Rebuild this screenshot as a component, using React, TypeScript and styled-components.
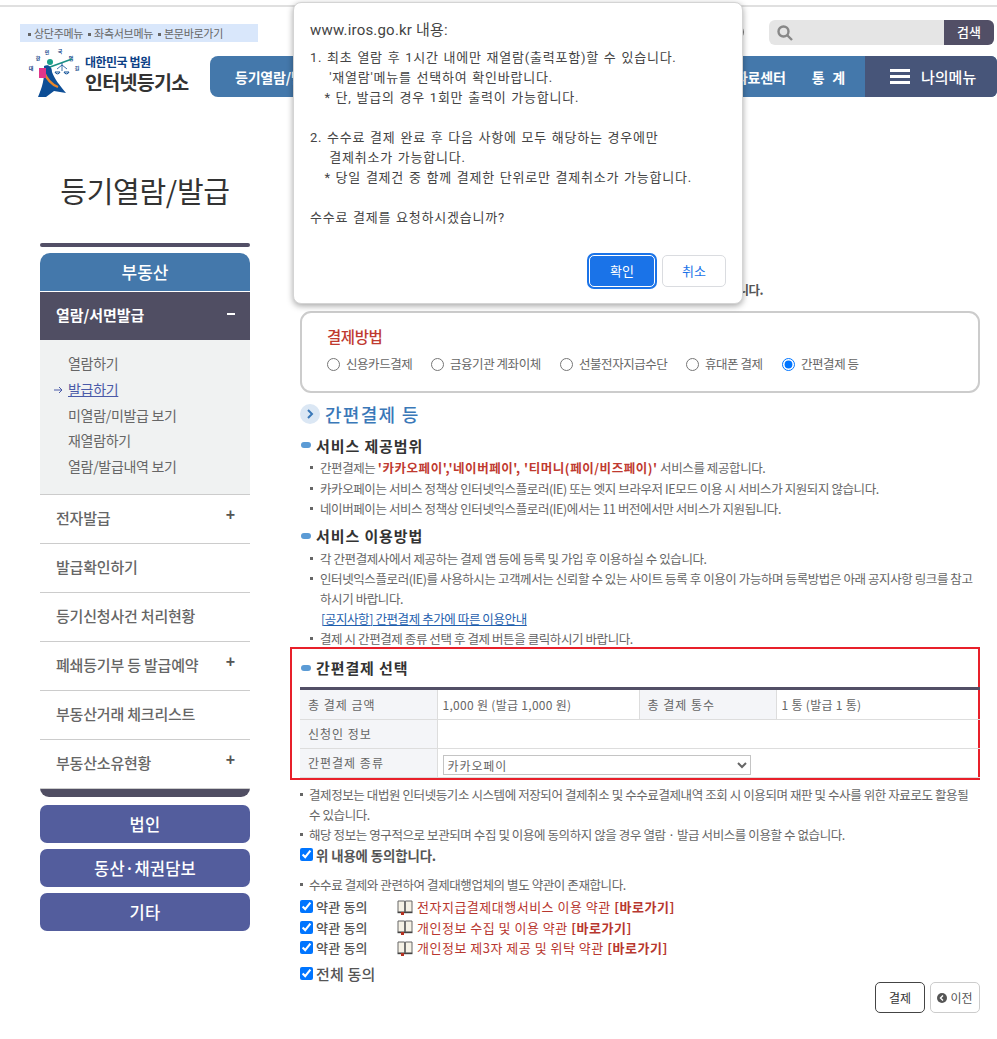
import React from "react";
import styled, { createGlobalStyle } from "styled-components";

const Global = createGlobalStyle`
  html, body { margin: 0; padding: 0; background: #fff; }
  body { font-family: "Noto Sans CJK KR", "Noto Sans", sans-serif; color: #666; }
  * { box-sizing: border-box; }
`;

const Page = styled.div`
  position: relative;
  width: 997px;
  height: 1039px;
  overflow: hidden;
  padding-top: 5px;
`;
const TopLine = styled.div`
  height: 2px;
  background: #e0e0e0;
`;
const TopRow = styled.div`
  display: flex;
  align-items: flex-start;
  padding: 13px 3px 0 20px;
  height: 38px;
`;
const SkipBar = styled.div`
  width: 238px;
  height: 18px;
  margin-top: 4px;
  padding-left: 8px;
  background: #d9e7fb;
  display: flex;
  gap: 5px;
  font-size: 11px;
  line-height: 18px;
  letter-spacing: -0.3px;
  color: #666;
`;
const Skip = styled.span`
  &::before {
    content: "";
    display: inline-block;
    width: 3px;
    height: 3px;
    background: #666;
    margin: 0 3px 2px 0;
    vertical-align: middle;
  }
`;
const Ring = styled.div`
  width: 14px;
  height: 14px;
  margin: 5px 25px 0 auto;
  border: 2px solid #777;
  border-radius: 50%;
`;
const Search = styled.div`
  width: 225px;
  height: 25px;
  background: #e5e5e5;
  border-radius: 6px;
  overflow: hidden;
  display: flex;
  align-items: center;
  justify-content: space-between;
  padding-left: 8px;
`;
const SearchBtn = styled.div`
  width: 50px;
  height: 25px;
  background: #524f66;
  color: #fff;
  font-size: 13px;
  font-weight: 500;
  line-height: 24px;
  text-align: center;
`;
const MainRow = styled.div`
  display: flex;
  align-items: flex-start;
  padding-left: 28px;
  margin-top: 3px;
  height: 49px;
`;
const Logo = styled.div`
  width: 182px;
  height: 49px;
  display: flex;
`;
const LogoText = styled.div`
  margin: 7px 0 0 5px;
  display: flex;
  flex-direction: column;
`;
const LogoTop = styled.div`
  font-size: 12px;
  line-height: 14px;
  font-weight: 700;
  letter-spacing: -0.5px;
  color: #0c4186;
`;
const LogoMain = styled.div`
  font-size: 19.5px;
  line-height: 25px;
  font-weight: 700;
  letter-spacing: -0.7px;
  color: #333;
`;
const Nav = styled.nav`
  flex: 1;
  height: 41px;
  margin-top: 8px;
  background: #4478ab;
  border-radius: 8px 6px 6px 8px;
  display: flex;
  align-items: center;
  overflow: hidden;
  padding-left: 25px;
`;
const NavItem = styled.div<{ $gap?: number; $wide?: boolean }>`
  color: #fff;
  font-size: 14px;
  font-weight: 700;
  letter-spacing: -0.2px;
  word-spacing: ${(p) => (p.$wide ? 5 : 0)}px;
  margin-right: ${(p) => p.$gap ?? 0}px;
  white-space: nowrap;
`;
const NavSpacer = styled.div`
  flex: 1;
`;
const MyMenu = styled.div`
  width: 132px;
  height: 41px;
  background: #475579;
  color: #fff;
  font-size: 15px;
  font-weight: 500;
  display: flex;
  align-items: center;
  gap: 11px;
  padding-left: 25px;
`;
const Burger = styled.span`
  width: 20px;
  height: 15px;
  border-top: 3px solid #fff;
  border-bottom: 3px solid #fff;
  display: flex;
  align-items: center;
  &::before {
    content: "";
    width: 100%;
    height: 3px;
    background: #fff;
  }
`;

const Main = styled.div`
  display: flex;
  padding-left: 40px;
`;
const Side = styled.aside`
  width: 210px;
  margin-right: 50px;
  padding-top: 74px;
`;
const SideTitle = styled.h1`
  margin: 0 0 32px;
  height: 40px;
  font-size: 29px;
  line-height: 38px;
  font-weight: 400;
  color: #333;
  text-align: center;
  letter-spacing: -0.3px;
  white-space: nowrap;
`;
const SideBar = styled.div`
  height: 4px;
  background: #524f66;
  border-radius: 2px;
  margin-bottom: 6px;
`;
const Category = styled.div`
  height: 38px;
  background: #4478ab;
  border-radius: 10px 10px 0 0;
  color: #fff;
  font-size: 17px;
  font-weight: 500;
  line-height: 38px;
  text-align: center;
  margin-bottom: 1px;
`;
const ActiveItem = styled.div`
  height: 48px;
  background: #504e63;
  color: #fff;
  font-size: 15px;
  font-weight: 700;
  letter-spacing: -0.05px;
  display: flex;
  align-items: center;
  justify-content: space-between;
  padding: 0 15px 3px 16px;
`;
const Minus = styled.span`
  width: 8px;
  height: 2px;
  background: #fff;
  margin-bottom: 2px;
`;
const SubPanel = styled.div`
  height: 154px;
  background: #f0f2f2;
  padding: 11px 0 0 28px;
`;
const SubItem = styled.div<{ $active?: boolean }>`
  position: relative;
  height: 25.8px;
  font-size: 14px;
  line-height: 25.8px;
  letter-spacing: -0.3px;
  color: ${(p) => (p.$active ? "#4a5aa8" : "#666")};
  text-decoration: ${(p) => (p.$active ? "underline" : "none")};
`;
const Arrow = styled.svg`
  position: absolute;
  left: -14px;
  top: 9px;
`;
const MenuItem = styled.div`
  height: 49px;
  border-top: 1px solid #ccc;
  display: flex;
  align-items: center;
  justify-content: space-between;
  padding: 0 15px 4px 16px;
  font-size: 15px;
  font-weight: 500;
  letter-spacing: -0.2px;
  color: #666;
`;
const Plus = styled.span`
  font-size: 16px;
  line-height: 16px;
  font-weight: 700;
  color: #555;
  margin-bottom: 4px;
  font-family: "Liberation Sans", sans-serif;
`;
const SideFoot = styled.div`
  height: 9px;
  background: #504e63;
  border-top: 1px solid #ccc;
  border-radius: 0 0 10px 10px;
  margin-bottom: 8px;
`;
const SideBtn = styled.div`
  height: 38px;
  margin-bottom: 6px;
  background: #535d9d;
  border-radius: 7px;
  color: #fff;
  font-size: 16.5px;
  font-weight: 500;
  line-height: 38px;
  text-align: center;
  letter-spacing: 0.2px;
`;

const Content = styled.main`
  width: 680px;
  padding-top: 183px;
`;
const HiddenLine = styled.div`
  width: 463px;
  height: 20px;
  font-size: 12.5px;
  line-height: 20px;
  font-weight: 700;
  letter-spacing: -0.5px;
  text-align: right;
  color: #555;
  white-space: nowrap;
`;
const PayBox = styled.div`
  height: 82px;
  margin-top: 11px;
  border: 2px solid #ccc;
  border-radius: 11px;
  padding: 11px 0 0 25px;
`;
const PayTitle = styled.div`
  font-size: 15.5px;
  line-height: 24px;
  font-weight: 500;
  color: #bf3a30;
  letter-spacing: -0.4px;
`;
const Radios = styled.div`
  display: grid;
  grid-template-columns: 104px 129px 126px 96px auto;
  margin-top: 6px;
`;
const RadioLabel = styled.label`
  display: flex;
  align-items: center;
  gap: 6px;
  font-size: 12.5px;
  line-height: 20px;
  letter-spacing: -0.45px;
  color: #666;
  white-space: nowrap;
`;
const Radio = styled.input`
  margin: 0;
  width: 13px;
  height: 13px;
`;
const Heading = styled.div`
  margin-top: 8px;
  height: 28px;
  padding-bottom: 2px;
  display: flex;
  align-items: center;
  gap: 5px;
  font-size: 18px;
  font-weight: 500;
  color: #3a78b8;
  letter-spacing: 1.3px;
`;
const ChevronBadge = styled.span`
  width: 20px;
  height: 20px;
  border-radius: 50%;
  background: #dbe7f4;
  display: flex;
  align-items: center;
  justify-content: center;
`;
const SubHead = styled.div<{ $top: number }>`
  margin-top: ${(p) => p.$top}px;
  height: 22px;
  padding-bottom: 2px;
  display: flex;
  align-items: center;
  gap: 5px;
  font-size: 15px;
  font-weight: 700;
  color: #333;
  letter-spacing: 0.9px;
  &::before {
    content: "";
    width: 10px;
    height: 6px;
    border-radius: 3px;
    background: #5b9bd5;
    margin-left: 1px;
  }
`;
const List = styled.div<{ $lh: number; $indent: number; $pad?: number }>`
  padding: ${(p) => p.$pad ?? 0}px 0 0 ${(p) => p.$indent}px;
  font-size: 12.5px;
  line-height: ${(p) => p.$lh}px;
  letter-spacing: -0.41px;
  color: #666;
`;
const Item = styled.div<{ $gap?: number }>`
  display: flex;
  &::before {
    content: "";
    flex: none;
    width: 3px;
    height: 3px;
    background: #666;
    margin: 8px ${(p) => p.$gap ?? 7}px 0 0;
  }
`;
const Strong = styled.b`
  color: #bf3a30;
  font-weight: 700;
  letter-spacing: 0.55px;
`;
const DocLink = styled.a`
  display: block;
  padding-left: 1px;
  color: #1f5fae;
  text-decoration: underline;
`;
const PickBox = styled.section`
  width: 690px;
  height: 133px;
  margin: -2px 0 0 -10px;
  border: 2px solid #e8202a;
  padding: 0 0 1px 8px;
`;
const PickHead = styled(SubHead)`
  height: 36px;
  margin-bottom: 2px;
  padding: 2px 0 0;
`;
const PayTable = styled.table`
  width: 680px;
  table-layout: fixed;
  border-collapse: collapse;
  border-top: 3px solid #524f66;
  font-size: 12px;
  letter-spacing: 0.3px;
  color: #666;
`;
const Row = styled.tr<{ $h: number }>`
  height: ${(p) => p.$h}px;
`;
const Th = styled.th`
  background: #f4f5f8;
  border: 1px solid #ddd;
  border-top: 0;
  border-left: 0;
  padding: 0 0 0 8px;
  text-align: left;
  font-weight: 400;
  letter-spacing: 1px;
`;
const Td = styled.td`
  border-bottom: 1px solid #ddd;
  border-right: 1px solid #ddd;
  padding: 0 0 0 5px;
  &:last-child { border-right: 0; }
`;
const Pick = styled.select`
  display: block;
  width: 308px;
  height: 20px;
  margin-top: 4px;
  padding: 0;
  border: 1px solid #c4c4c4;
  background: #fff;
  color: #666;
  font: inherit;
  letter-spacing: 0.9px;
`;
const Notes = styled(List)`
  margin-top: 5px;
`;
const AgreeStrong = styled.label`
  display: flex;
  align-items: center;
  gap: 3px;
  height: 20px;
  font-size: 13.4px;
  font-weight: 700;
  color: #555;
  letter-spacing: -0.1px;
`;
const Check = styled.input`
  margin: 0;
  width: 13px;
  height: 13px;
  flex: none;
`;
const TermsNote = styled(List)`
  margin-top: 10px;
`;
const Terms = styled.div`
  margin-top: 2px;
`;
const TermRow = styled.div`
  height: 20.5px;
  display: flex;
  align-items: center;
  font-size: 13px;
`;
const TermAgree = styled.label`
  width: 97px;
  display: flex;
  align-items: center;
  gap: 3px;
  font-weight: 500;
  color: #555;
  letter-spacing: 0.2px;
`;
const TermName = styled.a`
  margin-left: 4px;
  color: #b8372f;
  letter-spacing: 0.5px;
  font-weight: 400;
`;
const AllAgree = styled.label`
  margin-top: 5px;
  height: 20px;
  display: flex;
  align-items: center;
  gap: 3px;
  font-size: 15px;
  font-weight: 500;
  color: #555;
  letter-spacing: 0.2px;
`;
const Actions = styled.div`
  margin-top: -1px;
  display: flex;
  justify-content: flex-end;
  gap: 5px;
`;
const ActBtn = styled.div<{ $dark?: boolean }>`
  width: 50px;
  height: 31px;
  border: 1px solid ${(p) => (p.$dark ? "#444" : "#ccc")};
  border-radius: 5px;
  background: #fff;
  color: ${(p) => (p.$dark ? "#333" : "#555")};
  font-size: 12px;
  display: flex;
  align-items: center;
  justify-content: center;
  gap: 3px;
`;

const Dialog = styled.div`
  position: absolute;
  left: 293px;
  top: 2px;
  width: 450px;
  height: 302px;
  background: #fff;
  border: 1px solid #d4d4d4;
  border-radius: 8px;
  box-shadow: 0 2px 6px rgba(0, 0, 0, 0.35);
  padding: 16px 16px 0;
`;
const DialogTitle = styled.div`
  font-size: 15px;
  line-height: 22px;
  letter-spacing: 0.2px;
  color: #444;
  font-family: "Roboto", "Noto Sans CJK KR", sans-serif;
  margin-bottom: 7px;
`;
const DialogBody = styled.div`
  font-size: 13px;
  line-height: 20px;
  color: #444;
  white-space: pre;
  letter-spacing: 0.78px;
  word-spacing: 0.8px;
  min-height: 170px;
  font-family: "Roboto", "Noto Sans CJK KR", sans-serif;
`;
const DialogActions = styled.div`
  margin-top: 27px;
  display: flex;
  justify-content: flex-end;
  gap: 7px;
`;
const DialogBtn = styled.div<{ $primary?: boolean }>`
  width: ${(p) => (p.$primary ? 66 : 64)}px;
  height: 32px;
  border-radius: 5px;
  font-size: 13px;
  line-height: 30px;
  text-align: center;
  color: ${(p) => (p.$primary ? "#fff" : "#1a73e8")};
  background: ${(p) => (p.$primary ? "#1a73e8" : "#fff")};
  border: 1px solid ${(p) => (p.$primary ? "#fff" : "#dadce0")};
  box-shadow: ${(p) => (p.$primary ? "0 0 0 2px #1a73e8" : "none")};
`;

const LogoMark = () => (
  <svg width="52" height="49" viewBox="0 0 52 49">
    <g fontSize="5" fontWeight="700" fill="#0c4186" textAnchor="middle" fontFamily="'Noto Sans CJK KR', sans-serif">
      <text x="3" y="22">대</text>
      <text x="10" y="12">한</text>
      <text x="19" y="6">민</text>
      <text x="32" y="5">국</text>
      <text x="43" y="12">법</text>
      <text x="49" y="22">원</text>
    </g>
    <path d="M16 18C20 16 24 18 24 24C26 30 32 38 38 45L26 43L18 49L10 49C14 40 17 30 16 18Z" fill="#0d4e96" />
    <path d="M16 24C19 32 25 37 30 39" stroke="#e8862a" strokeWidth="2.2" fill="none" />
    <path d="M22 19L44 11" stroke="#1b8f85" strokeWidth="1.6" />
    <rect x="11" y="20" width="7" height="10" fill="#e0358a" />
    <circle cx="22" cy="14" r="3" fill="#1aa08a" />
    <path d="M34 15V23M29 21L34 17L39 21" stroke="#0d4e96" strokeWidth="0.8" fill="none" />
    <path d="M27 24A2.6 2.6 0 0 0 32 24ZM36 24A2.6 2.6 0 0 0 41 24Z" fill="none" stroke="#0d4e96" strokeWidth="1" />
  </svg>
);

const Book = () => (
  <svg width="16" height="16" viewBox="0 0 16 16">
    <path d="M1 2H7.6V13H1ZM8.4 2H15V13H8.4Z" fill="#f6f2e6" stroke="#666" strokeWidth="1" />
    <path d="M0.5 13.5H15.5" stroke="#444" strokeWidth="1.4" />
    <rect x="4" y="13" width="3" height="3" fill="#b5301f" />
  </svg>
);

const dialogText = `1. 최초 열람 후 1시간 내에만 재열람(출력포함)할 수 있습니다.
    '재열람'메뉴를 선택하여 확인바랍니다.
   * 단, 발급의 경우 1회만 출력이 가능합니다.

2. 수수료 결제 완료 후 다음 사항에 모두 해당하는 경우에만
    결제취소가 가능합니다.
   * 당일 결제건 중 함께 결제한 단위로만 결제취소가 가능합니다.

수수료 결제를 요청하시겠습니까?`;

const menu = [
  { t: "전자발급", plus: true },
  { t: "발급확인하기" },
  { t: "등기신청사건 처리현황" },
  { t: "폐쇄등기부 등 발급예약", plus: true },
  { t: "부동산거래 체크리스트" },
  { t: "부동산소유현황", plus: true },
];
const subs = ["열람하기", "발급하기", "미열람/미발급 보기", "재열람하기", "열람/발급내역 보기"];
const methods = ["신용카드결제", "금융기관 계좌이체", "선불전자지급수단", "휴대폰 결제", "간편결제 등"];
const terms = [
  "전자지급결제대행서비스 이용 약관",
  "개인정보 수집 및 이용 약관",
  "개인정보 제3자 제공 및 위탁 약관",
];

export default function App() {
  return (
    <Page>
      <Global />
      <TopLine />
      <TopRow>
        <SkipBar>
          <Skip>상단주메뉴</Skip>
          <Skip>좌측서브메뉴</Skip>
          <Skip>본문바로가기</Skip>
        </SkipBar>
        <Ring />
        <Search>
          <svg width="16" height="16" viewBox="0 0 16 16" fill="none" stroke="#888" strokeWidth="2.4">
            <circle cx="6.5" cy="6.5" r="5" />
            <path d="M10.5 10.5L15 15" />
          </svg>
          <SearchBtn>검색</SearchBtn>
        </Search>
      </TopRow>
      <MainRow>
        <Logo>
          <LogoMark />
          <LogoText>
            <LogoTop>대한민국 법원</LogoTop>
            <LogoMain>인터넷등기소</LogoMain>
          </LogoText>
        </Logo>
        <Nav>
          <NavItem>등기열람/발급</NavItem>
          <NavSpacer />
          <NavItem $gap={26}>자료센터</NavItem>
          <NavItem $gap={20} $wide>통 계</NavItem>
          <MyMenu>
            <Burger />
            나의메뉴
          </MyMenu>
        </Nav>
      </MainRow>
      <Main>
        <Side>
          <SideTitle>등기열람/발급</SideTitle>
          <SideBar />
          <Category>부동산</Category>
          <ActiveItem>
            열람/서면발급
            <Minus />
          </ActiveItem>
          <SubPanel>
            {subs.map((s, i) => (
              <SubItem key={s} $active={i === 1}>
                {i === 1 && (
                  <Arrow width="9" height="8" viewBox="0 0 9 8" fill="none" stroke="#4a5aa8">
                    <path d="M0 4H8M5 1L8 4L5 7" />
                  </Arrow>
                )}
                {s}
              </SubItem>
            ))}
          </SubPanel>
          {menu.map((m) => (
            <MenuItem key={m.t}>
              {m.t}
              {m.plus && <Plus>+</Plus>}
            </MenuItem>
          ))}
          <SideFoot />
          <SideBtn>법인</SideBtn>
          <SideBtn>동산·채권담보</SideBtn>
          <SideBtn>기타</SideBtn>
        </Side>
        <Content>
          <HiddenLine>수수료 결제 후 열람 또는 발급을 진행합니다.</HiddenLine>
          <PayBox>
            <PayTitle>결제방법</PayTitle>
            <Radios>
              {methods.map((m, i) => (
                <RadioLabel key={m}>
                  <Radio type="radio" name="pay" defaultChecked={i === 4} />
                  {m}
                </RadioLabel>
              ))}
            </Radios>
          </PayBox>
          <Heading>
            <ChevronBadge>
              <svg width="8" height="10" viewBox="0 0 8 10" fill="none" stroke="#3a78b8" strokeWidth="2">
                <path d="M2 1L6 5L2 9" />
              </svg>
            </ChevronBadge>
            간편결제 등
          </Heading>
          <SubHead $top={6}>서비스 제공범위</SubHead>
          <List $lh={20.5} $indent={10} $pad={1}>
            <Item>
              <span>
                간편결제는 <Strong>'카카오페이','네이버페이', '티머니(페이/비즈페이)'</Strong> 서비스를 제공합니다.
              </span>
            </Item>
            <Item>
              <span>카카오페이는 서비스 정책상 인터넷익스플로러(IE) 또는 엣지 브라우저 IE모드 이용 시 서비스가 지원되지 않습니다.</span>
            </Item>
            <Item>
              <span>네이버페이는 서비스 정책상 인터넷익스플로러(IE)에서는 11 버전에서만 서비스가 지원됩니다.</span>
            </Item>
          </List>
          <SubHead $top={6}>서비스 이용방법</SubHead>
          <List $lh={20} $indent={10} $pad={1}>
            <Item>
              <span>각 간편결제사에서 제공하는 결제 앱 등에 등록 및 가입 후 이용하실 수 있습니다.</span>
            </Item>
            <Item>
              <span>
                인터넷익스플로러(IE)를 사용하시는 고객께서는 신뢰할 수 있는 사이트 등록 후 이용이 가능하며 등록방법은 아래 공지사항 링크를 참고하시기 바랍니다.
                <DocLink>[공지사항] 간편결제 추가에 따른 이용안내</DocLink>
              </span>
            </Item>
            <Item>
              <span>결제 시 간편결제 종류 선택 후 결제 버튼을 클릭하시기 바랍니다.</span>
            </Item>
          </List>
          <PickBox>
            <PickHead $top={0}>간편결제 선택</PickHead>
            <PayTable>
              <colgroup>
                <col width="137" />
                <col width="202" />
                <col width="137" />
                <col />
              </colgroup>
              <tbody>
                <Row $h={31}>
                  <Th>총 결제 금액</Th>
                  <Td>1,000 원 (발급 1,000 원)</Td>
                  <Th>총 결제 통수</Th>
                  <Td>1 통 (발급 1 통)</Td>
                </Row>
                <Row $h={29}>
                  <Th>신청인 정보</Th>
                  <Td colSpan={3} />
                </Row>
                <Row $h={29}>
                  <Th>간편결제 종류</Th>
                  <Td colSpan={3}>
                    <Pick defaultValue="카카오페이">
                      <option>카카오페이</option>
                      <option>네이버페이</option>
                      <option>티머니</option>
                    </Pick>
                  </Td>
                </Row>
              </tbody>
            </PayTable>
          </PickBox>
          <Notes $lh={20} $indent={0}>
            <Item $gap={6}>
              <span>결제정보는 대법원 인터넷등기소 시스템에 저장되어 결제취소 및 수수료결제내역 조회 시 이용되며 재판 및 수사를 위한 자료로도 활용될 수 있습니다.</span>
            </Item>
            <Item $gap={6}>
              <span>해당 정보는 영구적으로 보관되며 수집 및 이용에 동의하지 않을 경우 열람 · 발급 서비스를 이용할 수 없습니다.</span>
            </Item>
          </Notes>
          <AgreeStrong>
            <Check type="checkbox" defaultChecked />위 내용에 동의합니다.
          </AgreeStrong>
          <TermsNote $lh={20} $indent={0}>
            <Item $gap={6}>
              <span>수수료 결제와 관련하여 결제대행업체의 별도 약관이 존재합니다.</span>
            </Item>
          </TermsNote>
          <Terms>
            {terms.map((t) => (
              <TermRow key={t}>
                <TermAgree>
                  <Check type="checkbox" defaultChecked />약관 동의
                </TermAgree>
                <Book />
                <TermName>
                  {t} <b>[바로가기]</b>
                </TermName>
              </TermRow>
            ))}
          </Terms>
          <AllAgree>
            <Check type="checkbox" defaultChecked />전체 동의
          </AllAgree>
          <Actions>
            <ActBtn $dark>결제</ActBtn>
            <ActBtn>
              <svg width="10" height="10" viewBox="0 0 10 10">
                <circle cx="5" cy="5" r="5" fill="#555" />
                <path d="M6 2.5L3.5 5L6 7.5" stroke="#fff" strokeWidth="1.4" fill="none" />
              </svg>
              이전
            </ActBtn>
          </Actions>
        </Content>
      </Main>
      <Dialog>
        <DialogTitle>www.iros.go.kr 내용:</DialogTitle>
        <DialogBody>{dialogText}</DialogBody>
        <DialogActions>
          <DialogBtn $primary>확인</DialogBtn>
          <DialogBtn>취소</DialogBtn>
        </DialogActions>
      </Dialog>
    </Page>
  );
}
